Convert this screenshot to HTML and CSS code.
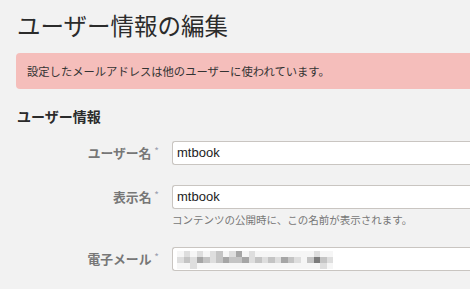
FILE: index.html
```html
<!DOCTYPE HTML>
<html>
<head>
  <meta charset="UTF-8">
  <title>ユーザー情報の編集</title>
  <link rel="stylesheet" href="styles.css">
</head>
<body>
  <div class="page">
    <h1>ユーザー情報の編集</h1>
    <div class="alert">設定したメールアドレスは他のユーザーに使われています。</div>

    <h2>ユーザー情報</h2>

    <div class="field">
      <label class="label">ユーザー名 <span class="req">*</span></label>
      <div class="control">
        <div class="input">mtbook</div>
      </div>
    </div>

    <div class="field">
      <label class="label">表示名 <span class="req">*</span></label>
      <div class="control">
        <div class="input">mtbook</div>
        <div class="hint">コンテンツの公開時に、この名前が表示されます。</div>
      </div>
    </div>

    <div class="field">
      <label class="label">電子メール <span class="req">*</span></label>
      <div class="control">
        <div class="input">
          <div class="mosaic">
            <span class="c0"></span><span class="c1"></span><span class="c0"></span><span class="c1"></span><span class="c0"></span><span class="c1"></span><span class="c2"></span><span class="c0"></span><span class="c1"></span><span class="c3"></span><span class="c0"></span><span class="c1"></span><span class="c0"></span><span class="c0"></span><span class="c0"></span><span class="c0"></span><span class="c0"></span><span class="c0"></span><span class="c0"></span><span class="c0"></span><span class="c0"></span><span class="c1"></span><span class="c0"></span><span class="c0"></span>
            <span class="c1"></span><span class="c2"></span><span class="c1"></span><span class="c3"></span><span class="c2"></span><span class="c1"></span><span class="c2"></span><span class="c3"></span><span class="c2"></span><span class="c2"></span><span class="c3"></span><span class="c1"></span><span class="c2"></span><span class="c1"></span><span class="c2"></span><span class="c1"></span><span class="c3"></span><span class="c2"></span><span class="c1"></span><span class="c0"></span><span class="c2"></span><span class="c4"></span><span class="c2"></span><span class="c1"></span>
            <span class="c0"></span><span class="c0"></span><span class="c1"></span><span class="c0"></span><span class="c0"></span><span class="c0"></span><span class="c0"></span><span class="c0"></span><span class="c0"></span><span class="c0"></span><span class="c0"></span><span class="c0"></span><span class="c0"></span><span class="c0"></span><span class="c0"></span><span class="c0"></span><span class="c0"></span><span class="c0"></span><span class="c0"></span><span class="c0"></span><span class="c0"></span><span class="c0"></span><span class="c1"></span><span class="c0"></span>
          </div>
        </div>
      </div>
    </div>
  </div>
</body>
</html>
```

FILE: styles.css
```css
body { margin: 0; padding: 0; background: #f2f2f2; color: #2b2b2b;
  font-family: "Noto Sans CJK JP", "Liberation Sans", sans-serif; }
.page { padding: 10px 0 0 16px; }

h1 { margin: 0 0 0 1px; font-size: 23.5px; line-height: 30px; font-weight: normal; color: #2b2b2b; }

/* the alert and the inputs run on past the right edge of the window */
.alert {
  margin-top: 13px;
  background: #f5bebb;
  border-radius: 4px 0 0 4px;
  padding: 11px 11px;
  font-size: 11.3px;
  line-height: 14px;
  color: #333;
}

h2 { margin: 18px 0 16px 1px; font-size: 14px; line-height: 18px; font-weight: bold; color: #2b2b2b; }

.field { display: grid; grid-template-columns: 143px 1fr; column-gap: 13px; margin-bottom: 20px; }
.label { text-align: right; font-size: 12.8px; font-weight: bold; color: #777; line-height: 24px; }
.req { font-size: 10px; color: #9aa0b0; font-weight: normal; vertical-align: top; position: relative; top: -2px; }

.input {
  height: 22px;
  background: #fff;
  border: 1px solid #c9c5c1;
  border-right: none;
  border-radius: 3px 0 0 3px;
  padding: 0 4px;
  font-family: "Liberation Sans", sans-serif;
  font-size: 13px;
  line-height: 22px;
  color: #222;
}
.hint { margin-top: 4px; font-size: 10.5px; line-height: 14px; color: #777; }

.mosaic { display: grid; grid-template-columns: repeat(24, 6.5px); grid-auto-rows: 6px; padding-top: 3px; }
.mosaic span { display: block; }
.c0 { background: #f6f6f6; }
.c1 { background: #dedede; }
.c2 { background: #c4c4c4; }
.c3 { background: #a6a6a6; }
.c4 { background: #7c7c7c; }
```
